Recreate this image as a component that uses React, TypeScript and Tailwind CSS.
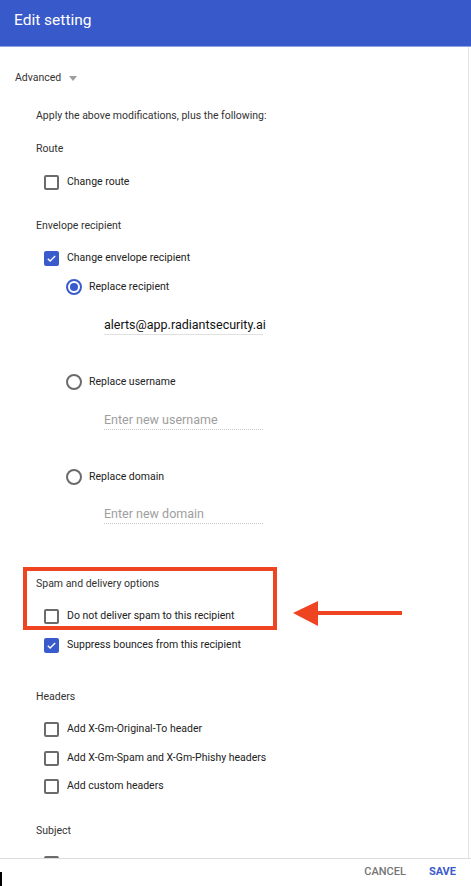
import type { ReactNode } from "react";

const font = { fontFamily: "Roboto, 'Noto Sans', sans-serif" };

function Checkbox({ checked }: { checked?: boolean }) {
  if (checked) {
    return (
      <span className="flex h-[15px] w-[15px] shrink-0 items-center justify-center rounded-[2px] bg-[#3a5bcc]">
        <svg width="11" height="11" viewBox="0 0 24 24" fill="none">
          <path d="M4 12.5l5 5L20 6.5" stroke="white" strokeWidth="3" />
        </svg>
      </span>
    );
  }
  return <span className="h-[15px] w-[15px] shrink-0 rounded-[2px] border-2 border-[#6b6b6b]" />;
}

function Radio({ checked }: { checked?: boolean }) {
  return (
    <span
      className={
        checked
          ? "flex h-[16px] w-[16px] shrink-0 items-center justify-center rounded-full border-2 border-[#3a5bcc]"
          : "h-[16px] w-[16px] shrink-0 rounded-full border-2 border-[#6b6b6b]"
      }
    >
      {checked && <span className="h-[8px] w-[8px] rounded-full bg-[#3a5bcc]" />}
    </span>
  );
}

function Row({ mt, box, children }: { mt: string; box: ReactNode; children: ReactNode }) {
  return (
    <div className={`flex h-[16px] items-center gap-[8px] pl-[44px] text-[10.5px] leading-[16px] text-[#222] ${mt}`}>
      {box}
      <span className="whitespace-nowrap">{children}</span>
    </div>
  );
}

function Heading({ mt, children }: { mt: string; children: ReactNode }) {
  return <div className={`h-[16px] pl-[36px] text-[10.5px] leading-[16px] text-[#333] ${mt}`}>{children}</div>;
}

function RadioRow({ mt, checked, children }: { mt: string; checked?: boolean; children: ReactNode }) {
  return (
    <div className={`flex h-[16px] items-center gap-[7px] pl-[66px] text-[10.5px] leading-[16px] text-[#222] ${mt}`}>
      <Radio checked={checked} />
      <span>{children}</span>
    </div>
  );
}

function Field({ mt, value, placeholder }: { mt: string; value?: string; placeholder?: string }) {
  return (
    <div className={`ml-[104px] h-[19px] w-[159px] text-[12.5px] leading-[18px] ${mt} ${value ? "border-b border-[#e0e0e0] text-[#111]" : "border-b border-dotted border-[#c8c8c8] text-[#9e9e9e]"}`}>
      {value ?? placeholder}
    </div>
  );
}

export default function App() {
  return (
    <div className="relative flex h-[886px] w-[471px] flex-col overflow-hidden bg-white" style={font}>
      <div className="h-[47px] shrink-0 border-b border-[#8ea2e4] bg-[#3759c9] pl-[14px] pt-[10px] text-[15.5px] leading-[20px] text-white">
        Edit setting
      </div>

      <div className="h-[811px] w-[469px] shrink-0 overflow-hidden border-r border-[#e2e2e2]">
        <div className="mt-[23px] flex h-[16px] items-center gap-[8px] pl-[15px] text-[10.5px] leading-[16px] text-[#333]">
          <span>Advanced</span>
          <span className="h-0 w-0 border-x-[4px] border-t-[5px] border-x-transparent border-t-[#9e9e9e]" />
        </div>

        <Heading mt="mt-[22px]">Apply the above modifications, plus the following:</Heading>

        <Heading mt="mt-[17px]">Route</Heading>
        <Row mt="mt-[17px]" box={<Checkbox />}>Change route</Row>

        <Heading mt="mt-[28px]">Envelope recipient</Heading>
        <Row mt="mt-[16px]" box={<Checkbox checked />}>Change envelope recipient</Row>
        <RadioRow mt="mt-[13px]" checked>Replace recipient</RadioRow>
        <Field mt="mt-[21px]" value="alerts@app.radiantsecurity.ai" />
        <RadioRow mt="mt-[39px]">Replace username</RadioRow>
        <Field mt="mt-[21px]" placeholder="Enter new username" />
        <RadioRow mt="mt-[39px]">Replace domain</RadioRow>
        <Field mt="mt-[20px]" placeholder="Enter new domain" />

        <Heading mt="mt-[52px]">Spam and delivery options</Heading>
        <Row mt="mt-[16px]" box={<Checkbox />}>Do not deliver spam to this recipient</Row>
        <Row mt="mt-[13px]" box={<Checkbox checked />}>Suppress bounces from this recipient</Row>

        <Heading mt="mt-[36px]">Headers</Heading>
        <Row mt="mt-[16px]" box={<Checkbox />}>Add X-Gm-Original-To header</Row>
        <Row mt="mt-[13px]" box={<Checkbox />}>Add X-Gm-Spam and X-Gm-Phishy headers</Row>
        <Row mt="mt-[12px]" box={<Checkbox />}>Add custom headers</Row>

        <Heading mt="mt-[29px]">Subject</Heading>
        <Row mt="mt-[16px]" box={<Checkbox />}>Prepend custom subject</Row>
      </div>

      <div className="flex h-[28px] shrink-0 items-center border-t border-[#dcdcdc] pr-[15px] text-[11px] font-medium">
        <span className="mt-[12px] h-[14px] w-[2px] bg-black" />
        <span className="ml-auto text-[#757575]">CANCEL</span>
        <span className="ml-[23px] font-bold text-[#3a5bcc]">SAVE</span>
      </div>

      {/* annotation overlay */}
      <div className="absolute left-[23px] top-[567px] h-[63px] w-[254px] border-4 border-[#ee4422]" />
      <svg className="absolute left-[292px] top-[600px]" width="112" height="28" viewBox="0 0 112 28">
        <polygon points="1,13 26,1 26,26" fill="#ee4422" />
        <rect x="24" y="11" width="86" height="4" fill="#ee4422" />
      </svg>
    </div>
  );
}
